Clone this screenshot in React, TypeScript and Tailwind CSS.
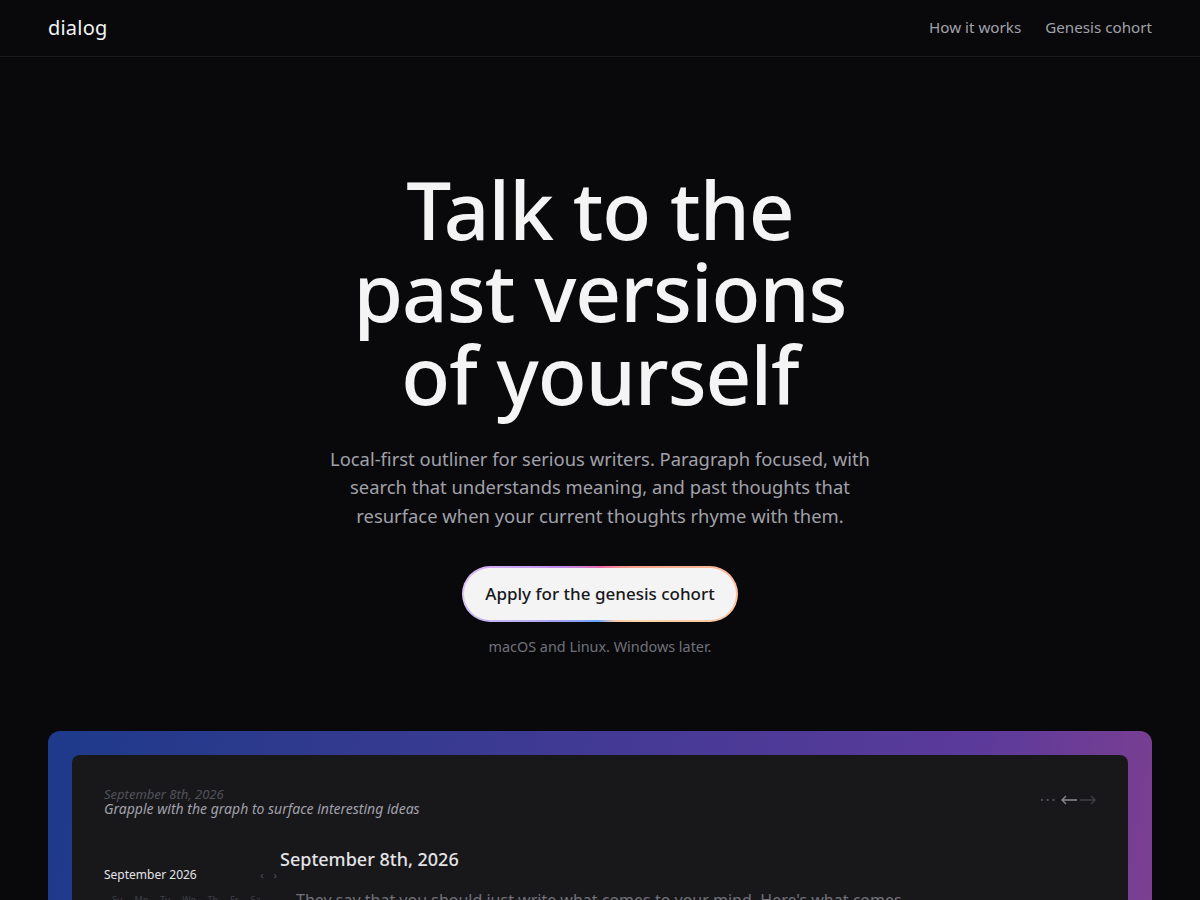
const font = "font-['Noto_Sans',sans-serif]";

function Nav() {
  return (
    <nav className="flex h-[57px] items-center justify-between border-b border-white/[0.08] px-12">
      <span className="text-[20px] tracking-[0.01em] text-[#f4f4f5]">dialog</span>
      <div className="mb-[2px] flex gap-6 text-[15.2px] text-[#a1a1aa]">
        <a>How it works</a>
        <a>Genesis cohort</a>
      </div>
    </nav>
  );
}

function Hero() {
  return (
    <section className="flex flex-col items-center pt-[111px] text-center">
      <h1 className="text-[80px] font-medium leading-[82.4px] tracking-[-1px] text-[#f4f4f5]">
        Talk to the
        <br />
        past versions
        <br />
        of yourself
      </h1>
      <p className="mt-[29.4px] w-[560px] text-[18.4px] leading-[28.52px] text-[#a1a1aa]">
        Local-first outliner for serious writers. Paragraph focused, with search that understands meaning, and past thoughts that resurface when your current thoughts rhyme with them.
      </p>
      <div className="mt-[35.4px] rounded-full bg-[conic-gradient(from_0deg,#ec6aa8,#f9a08a_50deg,#fed7aa_120deg,#fdc8a8_150deg,#60a5fa_185deg,#a5a0f0_240deg,#e0c8f5_270deg,#c08cf0_300deg,#ec6aa8_360deg)] p-[2px]">
        <button className="h-[52px] rounded-full bg-[#f4f4f5] px-[21px] text-[17px] font-medium text-[#18181b]">
          Apply for the genesis cohort
        </button>
      </div>
      <p className="mt-[14px] text-[14.4px] text-[#71717a]">macOS and Linux. Windows later.</p>
    </section>
  );
}

function Preview() {
  return (
    <div className="mx-12 mt-[74px] rounded-t-xl bg-[linear-gradient(100deg,#1e3a8a,#5b3a9b_80%,#80408f)] p-6 pb-0">
      <div className="h-[300px] rounded-lg bg-[#18181b] px-8 pt-[32px]">
        <div className="flex items-start justify-between">
          <div className="italic">
            <div className="h-[14px] text-[13px] leading-[14px] text-[#52525b]">September 8th, 2026</div>
            <div className="text-[14px] leading-[16px] text-[#a1a1aa]">Grapple with the graph to surface interesting ideas</div>
          </div>
          <div className="flex items-center pt-[5px] text-[#52525b]">
            <span className="mr-[4px] text-[16px] leading-none tracking-[1.5px]">···</span>
            <svg width="16" height="10" viewBox="0 0 16 10" fill="none" stroke="#8a8a92" strokeWidth="1.3" className="mr-[3px]">
              <path d="M16 5H1M5 1 1 5l4 4" />
            </svg>
            <svg width="16" height="10" viewBox="0 0 16 10" fill="none" stroke="#3f3f46" strokeWidth="1.3">
              <path d="M0 5h15M11 1l4 4-4 4" />
            </svg>
          </div>
        </div>
        <div className="mt-[29px] flex">
          <div className="w-[176px] shrink-0 pt-[20px]">
            <div className="flex items-center justify-between">
              <span className="text-[12px] text-[#e4e4e7]">September 2026</span>
              <span className="mr-[3px] flex gap-[10px] text-[11px] text-[#52525b]">
                <span>‹</span>
                <span>›</span>
              </span>
            </div>
            <div className="mt-[9px] flex gap-[12px] pl-2 text-[9px] text-[#3f3f46]">
              <span>Su</span><span>Mo</span><span>Tu</span><span>We</span><span>Th</span><span>Fr</span><span>Sa</span>
            </div>
          </div>
          <div>
            <h2 className="text-[18px] font-medium text-[#e4e4e7]">September 8th, 2026</h2>
            <p className="mt-[15px] pl-4 text-[16px] text-[#71717a]">
              They say that you should just write what comes to your mind. Here's what comes
            </p>
          </div>
        </div>
      </div>
    </div>
  );
}

export default function App() {
  return (
    <div className={`h-[900px] overflow-hidden bg-[#09090b] ${font}`}>
      <Nav />
      <Hero />
      <Preview />
    </div>
  );
}
